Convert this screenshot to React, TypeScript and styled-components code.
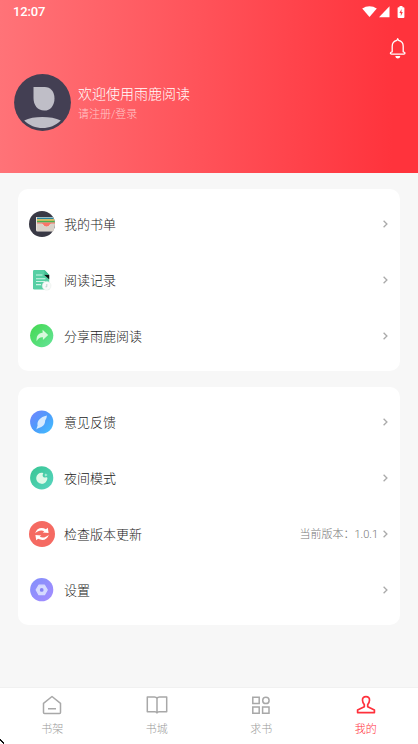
import React from "react";
import styled, { createGlobalStyle } from "styled-components";

const GlobalStyle = createGlobalStyle`
  * { box-sizing: border-box; }
  body {
    margin: 0;
    background: #f7f7f7;
    font-family: Roboto, "Noto Sans CJK SC", sans-serif;
    overflow: hidden;
  }
  svg { display: block; flex: none; }
`;

const Screen = styled.div`
  position: relative;
  display: flex;
  flex-direction: column;
  width: 418px;
  height: 744px;
  overflow: hidden;
  background: #f7f7f7;
`;

const Header = styled.header`
  height: 173px;
  flex: none;
  background: linear-gradient(91deg, #ff7378 0%, #ff333c 94%);
  color: #fff;
`;

const StatusBar = styled.div`
  display: flex;
  justify-content: space-between;
  align-items: center;
  height: 24px;
  padding: 0 13px 0 13px;
`;

const Clock = styled.span`
  font-size: 13px;
  line-height: 24px;
  font-weight: 500;
  letter-spacing: -0.15px;
`;

const StatusIcons = styled.div`
  display: flex;
  align-items: center;
  height: 22px;
`;

const Actions = styled.div`
  display: flex;
  justify-content: flex-end;
  height: 50px;
  padding: 13px 10px 0 0;
`;

const Profile = styled.div`
  display: flex;
  gap: 8px;
  padding-left: 13.5px;
`;

const Names = styled.div`
  padding-top: 10px;
  margin-left: -0.5px;
`;

const Title = styled.div`
  font-size: 14px;
  line-height: 20px;
  font-weight: 300;
`;

const Subtitle = styled.div`
  font-size: 11px;
  font-weight: 300;
  line-height: 22px;
  color: rgba(255, 255, 255, 0.65);
`;

const Content = styled.main`
  flex: 1;
  display: flex;
  flex-direction: column;
  gap: 16px;
  padding: 16px 18px 0;
`;

const Card = styled.section`
  padding: 7px 11px 7px 10px;
  background: #fff;
  border-radius: 10px;
`;

const Row = styled.div`
  display: flex;
  align-items: center;
  height: 56px;
`;

const RowLabel = styled.span`
  flex: 1;
  margin-left: 8px;
  padding-top: 1px;
  font-size: 13px;
  font-weight: 300;
  line-height: 20px;
  color: #222;
`;

const RowNote = styled.span`
  margin-right: 3px;
  padding-top: 1px;
  font-size: 11px;
  font-weight: 300;
  line-height: 18px;
  color: #777;
`;

const TabBar = styled.nav`
  display: grid;
  grid-template-columns: repeat(4, 1fr);
  flex: none;
  height: 57px;
  background: #fff;
  border-top: 1px solid #f1f1f1;
`;

const Tab = styled.div<{ $active?: boolean }>`
  display: flex;
  flex-direction: column;
  align-items: center;
  padding-top: 7px;
  gap: 6px;
  font-size: 11px;
  font-weight: 300;
  line-height: 18px;
  color: ${(p) => (p.$active ? "#ff303b" : "#999")};

  svg {
    color: ${(p) => (p.$active ? "#ff303b" : "#a8a8a8")};
  }
`;

const PointerTip = styled.svg`
  position: absolute;
  left: 0;
  bottom: 0;
`;

const Wifi = () => (
  <svg width="15" height="12" viewBox="0 0 15 12" fill="#fff">
    <path d="M0.2 2.6C4.4-.7 10.6-.7 14.8 2.6L7.5 11Z" />
  </svg>
);
const Signal = () => (
  <svg width="11" height="12" viewBox="0 0 11 12" fill="#fff">
    <path d="M10.5.3V11.300H0Z" />
  </svg>
);
const Battery = () => (
  <svg width="8" height="13" viewBox="0 0 8 13">
    <path d="M2.500 0h3v1.200h1q.9 0 .9.900v9q0 .9-.9.9h-5q-.9 0-.9-.9v-9q0-.9.900-.9h1Z" fill="#fff" />
    <path d="M4.600 3L2.400 7h1.400v3.300L5.800 6H4.400Z" fill="#ff3a42" />
  </svg>
);
const IconGap = styled.i<{ $w: number }>`
  width: ${(p) => p.$w}px;
`;

const Bell = () => (
  <svg width="20" height="24" viewBox="0 0 20 24" fill="none" stroke="#fff" strokeWidth="1.3" strokeLinejoin="round" strokeLinecap="round">
    <path d="M4.200 14.800V9.200C4.200 6.200 6.300 3.900 8.900 3.300L9.700 1.700L10.500 3.300C13.200 3.900 15.200 6.200 15.200 9.200v5.600q1.800.4 1.800 1.300T15.800 17.100H3.600q-1.200 0-1.200-1t1.800-1.300Z" />
    <path d="M8 19.600h3.600q-.3 1.200-1.800 1.200T8 19.600Z" fill="#fff" />
  </svg>
);

const Avatar = () => (
  <svg width="57" height="57" viewBox="0 0 57 57">
    <circle cx="28.500" cy="28.500" r="28.400" fill="#433f53" />
    <path d="M19.500 13h11.200C36.500 13 40.500 17.600 40.500 24.400s-4 12.200-10.300 12.200C23.500 36.600 19.500 31 19.500 24Z" fill="#bfbec7" />
    <path d="M10.200 46.400C19 42 37 41.800 46.800 46.400C37 56.500 20 56.500 10.200 46.400Z" fill="#bfbec7" />
  </svg>
);

const Chevron = () => (
  <svg width="8" height="10" viewBox="0 0 8 10" fill="none" stroke="#aaa" strokeWidth="1.300">
    <path d="M2.600 1.800L5.900 5L2.600 8.200" />
  </svg>
);

const BookListIcon = () => (
  <svg width="28" height="28" viewBox="0 0 28 28">
    <circle cx="14" cy="14" r="13" fill="#393945" />
    <path d="M8 7h17a13 13 0 0 1 1.700 8l-1.500 6.600H9.700q-1.700 0-1.700-1.500Z" fill="#e8e2dc" />
    <path d="M9 7.600h16.400v1.700H9Z" fill="#24859f" />
    <path d="M9 9.300h17.200v1.500H9Z" fill="#e6b83f" />
    <path d="M9 10.800h17.700v1.800H9Z" fill="#49b052" />
    <path d="M9 12.600h17.900v1.300h-4.700q-1.400 2.800-3.700 2.800t-3.700-2.800H9Z" fill="#fa7468" />
    <path d="M9 13.400h5.200q1.600 3.300 4.300 3.300t4.300-3.300h4.100q0 4-1.700 7.600H10q-1 0-1-1Z" fill="#d9d2c9" />
  </svg>
);

const HistoryIcon = () => (
  <svg width="28" height="28" viewBox="0 0 28 28">
    <path d="M6.300 4h10.200l4.700 5V23.600H6.300q-1.300 0-1.300-1.300v-17Q5 4 6.300 4Z" fill="#57cfa4" />
    <path d="M16 8.800h5.200v4.500Z" fill="#111" />
    <path d="M16.500 4v4.800h4.700Z" fill="#42bc90" />
    <path d="M8 9h6.500M8 12.800h9.500M8 15.500h9M8 18.600h5" stroke="#cff5e6" strokeWidth="1.100" />
    <circle cx="18.600" cy="19.800" r="4.400" fill="#f8f9f9" stroke="#e4eae7" strokeWidth=".5" />
    <path d="M18.800 18v2.800h-1.300" fill="none" stroke="#a9d0c1" strokeWidth=".8" />
  </svg>
);

const ShareIcon = () => (
  <svg width="28" height="28" viewBox="0 0 28 28">
    <defs>
      <linearGradient id="share" x1="0" y1="0" x2="1" y2="1">
        <stop stopColor="#43d84e" /><stop offset="1" stopColor="#65e49a" />
      </linearGradient>
    </defs>
    <circle cx="13.700" cy="13.600" r="11.600" fill="url(#share)" />
    <path d="M14.600 7.800L20.200 13L14.900 18.100V15.300C11.800 15.100 10.300 16.200 8.600 19.200C8.300 14 10.200 10.900 14.600 10.700Z" fill="#d7f8dc" />
  </svg>
);

const FeedbackIcon = () => (
  <svg width="28" height="28" viewBox="0 0 28 28">
    <defs>
      <linearGradient id="feedback" x1="0" y1="0" x2="1" y2="1">
        <stop stopColor="#7583ff" /><stop offset=".5" stopColor="#4c9cfb" /><stop offset="1" stopColor="#42c2ff" />
      </linearGradient>
    </defs>
    <circle cx="13.700" cy="14" r="11.600" fill="url(#feedback)" />
    <path d="M18.900 7.500C12 9 8.800 13 9.600 17.600L8.300 21.400C10 19.800 11.600 20.100 13.300 19.100C16.200 17.500 17.200 15 17.200 12.500Q18.900 10.500 18.900 7.500Z" fill="#d5eaff" />
  </svg>
);

const NightIcon = () => (
  <svg width="28" height="28" viewBox="0 0 28 28">
    <defs>
      <linearGradient id="night" x1="0" y1="0" x2="1" y2="1">
        <stop stopColor="#37c592" /><stop offset="1" stopColor="#58d5c0" />
      </linearGradient>
    </defs>
    <circle cx="13.700" cy="13.800" r="11.600" fill="url(#night)" />
    <path d="M14.300 8.700C15.600 8.900 15.400 9.700 14.700 10.600Q14.200 13.700 17.100 13.400Q19.600 12.600 19.400 14.300A5.600 5.600 0 1 1 14.300 8.700Z" fill="#dff9e8" />
    <path d="M17.900 9.200l.5 1.300 1.300.5-1.300.5-.5 1.300-.5-1.300-1.300-.5 1.300-.5Z" fill="#c7f6df" />
  </svg>
);

const UpdateIcon = () => (
  <svg width="28" height="28" viewBox="0 0 28 28">
    <circle cx="14" cy="14" r="13" fill="#f56a62" />
    <g fill="#fff">
      <path d="M7.200 13.300C8.500 8.500 13.200 6.700 17.900 9.200L19.800 7.700L20.600 13L14.700 12.600L16.300 11.200C13.300 9.800 10.100 10.500 7.200 13.300Z" />
      <path d="M20.800 14.700C19.500 19.500 14.800 21.300 10.100 18.800L8.200 20.300L7.400 15L13.300 15.400L11.700 16.800C14.700 18.200 17.900 17.500 20.800 14.700Z" />
    </g>
  </svg>
);

const SettingsIcon = () => (
  <svg width="28" height="28" viewBox="0 0 28 28">
    <defs>
      <linearGradient id="settings" x1="0" y1="0" x2="1" y2="1">
        <stop stopColor="#8290fb" /><stop offset="1" stopColor="#a58cff" />
      </linearGradient>
    </defs>
    <circle cx="13.700" cy="13.700" r="11.600" fill="url(#settings)" />
    <path d="M10.900 9.200h5.600l2.700 4.700-2.700 4.700h-5.600L8.200 13.900Z" fill="#d6daff" stroke="#d6daff" strokeWidth="1.200" strokeLinejoin="round" />
    <circle cx="13.700" cy="13.900" r="1.900" fill="#8582f5" />
  </svg>
);

const HomeIcon = () => (
  <svg width="22" height="20" viewBox="0 0 22 20" fill="none" stroke="currentColor" strokeWidth="1.500" strokeLinejoin="round">
    <path d="M2.500 8.300L11 1.500l8.500 6.800v9.200q0 1-1 1h-15q-1 0-1-1ZM7 13.800h8" />
  </svg>
);
const BookIcon = () => (
  <svg width="22" height="20" viewBox="0 0 22 20" fill="none" stroke="currentColor" strokeWidth="1.500" strokeLinejoin="round">
    <path d="M11 3.300Q10.300 2 8.500 2H1.300v14.700h7.700q1.500 0 2 1.200q.5-1.200 2-1.200h7.700V2H13.500Q11.700 2 11 3.300Zm0 0v14.600" />
  </svg>
);
const GridIcon = () => (
  <svg width="22" height="20" viewBox="0 0 22 20" fill="none" stroke="currentColor" strokeWidth="1.500">
    <path d="M2.800 2.300h6.400v6.200H2.800ZM2.800 11.900h6.400v6.400H2.800ZM12.600 11.900H19v6.400h-6.400Z" />
    <circle cx="15.900" cy="5.400" r="3.200" />
  </svg>
);
const UserIcon = () => (
  <svg width="22" height="20" viewBox="0 0 22 20" fill="none" stroke="currentColor" strokeWidth="1.700" strokeLinejoin="round">
    <path d="M11 1.600c2.400 0 3.700 1.500 3.500 3.700-.1 2-.8 3.300-1.800 4.300v2.100l6.700 3.300v2.600H2.600V15l6.700-3.300V9.600C8.300 8.600 7.600 7.300 7.500 5.300 7.300 3.100 8.600 1.600 11 1.600Z" />
  </svg>
);

type Item = { label: string; icon: React.ReactNode; note?: string };

const groups: Item[][] = [
  [
    { label: "我的书单", icon: <BookListIcon /> },
    { label: "阅读记录", icon: <HistoryIcon /> },
    { label: "分享雨鹿阅读", icon: <ShareIcon /> },
  ],
  [
    { label: "意见反馈", icon: <FeedbackIcon /> },
    { label: "夜间模式", icon: <NightIcon /> },
    { label: "检查版本更新", icon: <UpdateIcon />, note: "当前版本：1.0.1" },
    { label: "设置", icon: <SettingsIcon /> },
  ],
];

const tabs = [
  { label: "书架", icon: <HomeIcon /> },
  { label: "书城", icon: <BookIcon /> },
  { label: "求书", icon: <GridIcon /> },
  { label: "我的", icon: <UserIcon />, active: true },
];

export default function App() {
  return (
    <Screen>
      <GlobalStyle />
      <Header>
        <StatusBar>
          <Clock>12:07</Clock>
          <StatusIcons>
            <Wifi />
            <IconGap $w={2} />
            <Signal />
            <IconGap $w={7} />
            <Battery />
          </StatusIcons>
        </StatusBar>
        <Actions>
          <Bell />
        </Actions>
        <Profile>
          <Avatar />
          <Names>
            <Title>欢迎使用雨鹿阅读</Title>
            <Subtitle>请注册/登录</Subtitle>
          </Names>
        </Profile>
      </Header>
      <Content>
        {groups.map((items, i) => (
          <Card key={i}>
            {items.map((item) => (
              <Row key={item.label}>
                {item.icon}
                <RowLabel>{item.label}</RowLabel>
                {item.note && <RowNote>{item.note}</RowNote>}
                <Chevron />
              </Row>
            ))}
          </Card>
        ))}
      </Content>
      <TabBar>
        {tabs.map((tab) => (
          <Tab key={tab.label} $active={tab.active}>
            {tab.icon}
            <span>{tab.label}</span>
          </Tab>
        ))}
      </TabBar>
      <PointerTip width="6" height="5" viewBox="0 0 6 5">
        <path d="M0 0h1v1h1v1h1v1h1v2H3V4H2V3H1V2H0Z" fill="#111" />
      </PointerTip>
    </Screen>
  );
}
